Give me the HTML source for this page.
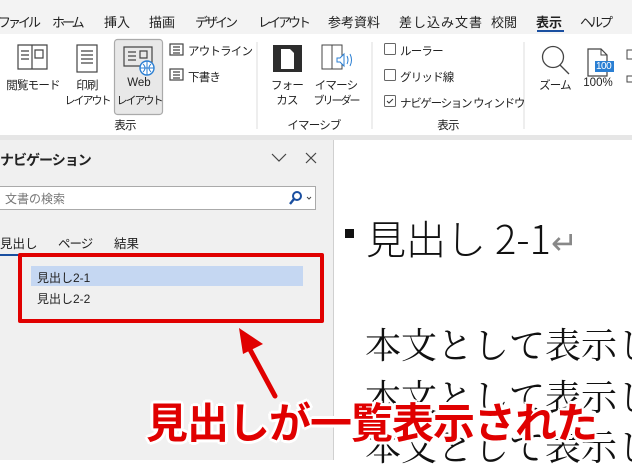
<!DOCTYPE html>
<html><head><meta charset="utf-8"><style>
*{margin:0;padding:0;box-sizing:border-box}
body{width:632px;height:460px;overflow:hidden;position:relative;background:#fff;font-family:"Liberation Sans","Noto Sans CJK JP",sans-serif;color:#222}
.a{position:absolute;white-space:nowrap}
.tab{font-size:13px;top:12px}
.k{letter-spacing:-3px}
.s{font-size:11.5px;letter-spacing:-0.8px}
.n{font-size:11px;letter-spacing:-2px}
.c{text-align:center;width:80px}
.serif{font-family:"Liberation Serif","Noto Serif CJK JP","Noto Serif CJK SC",serif}
</style></head><body>
<div class="a" style="left:0;top:0;width:632px;height:34px;background:#f3f3f3"></div>
<div class="a tab k" style="left:-2px">ファイル</div>
<div class="a tab k" style="left:52px">ホーム</div>
<div class="a tab" style="left:104px">挿入</div>
<div class="a tab" style="left:149px">描画</div>
<div class="a tab k" style="left:195px">デザイン</div>
<div class="a tab k" style="left:258px">レイアウト</div>
<div class="a tab" style="left:328px">参考資料</div>
<div class="a tab" style="left:399px;letter-spacing:1px">差し込み文書</div>
<div class="a tab" style="left:491px">校閲</div>
<div class="a tab" style="left:536px;font-weight:bold">表示</div>
<div class="a" style="left:537px;top:30px;width:27px;height:2px;background:#1a4fa0"></div>
<div class="a tab k" style="left:580px">ヘルプ</div>
<div class="a" style="left:0;top:135px;width:632px;height:5px;background:#e6e6e6"></div>
<svg class="a" style="left:0;top:34px" width="632" height="101">
<g fill="none" stroke="#444" stroke-width="1.2">
<path d="M18 11h14v24H18zM32 11h15v24H32z"/><path d="M21 17h8M21 21h8M21 25h8M35 16h8v8h-8z"/>
<rect x="77" y="11" width="20" height="27"/><path d="M81 17h12M81 21h12M81 25h12M81 29h12"/>
<rect x="114.5" y="5.5" width="48" height="75" rx="3" fill="#e8e8e8" stroke="#aaa"/>
<path d="M124 13h28v19h-28z"/><path d="M128 18h8M128 22h8M128 26h8M140 17h7v7h-7z"/>
<rect x="170" y="10" width="13" height="11"/><path d="M173 13h7M173 16h7M173 19h7"/>
<rect x="170" y="35" width="13" height="11"/><path d="M173 38h7M173 41h7M173 44h7"/>
</g>
<circle cx="147" cy="34" r="7" fill="#fff" stroke="#2b7fd3" stroke-width="1.4"/>
<path d="M140 34h14M147 27v14M143 30q4 4 0 8M151 30q-4 4 0 8" stroke="#2b7fd3" fill="none"/>
<line x1="257" y1="8" x2="257" y2="95" stroke="#ddd"/>
<rect x="273" y="11" width="29" height="27" fill="#2d2d2d"/><path d="M281 15h9l4 4v16h-13z" fill="#fff"/>
<path d="M322 11h10v24h-10zM332 11h10v24h-10z" fill="none" stroke="#444"/>
<path d="M337 24h3l4-4v12l-4-4h-3z" fill="#fff" stroke="#2b7fd3"/><path d="M347 22q2 4 0 8M350 20q3 6 0 12" stroke="#2b7fd3" fill="none"/>
<line x1="372" y1="8" x2="372" y2="95" stroke="#ddd"/>
<rect x="384.5" y="9.5" width="11" height="11" rx="1" fill="#fff" stroke="#666"/>
<rect x="384.5" y="35.5" width="11" height="11" rx="1" fill="#fff" stroke="#666"/>
<rect x="384.5" y="61.5" width="11" height="11" rx="1" fill="#fff" stroke="#666"/>
<path d="M387 67l2 2 4-4" stroke="#333" fill="none"/>
<line x1="524" y1="8" x2="524" y2="95" stroke="#ddd"/>
<circle cx="553" cy="23" r="10.5" fill="none" stroke="#444" stroke-width="1.3"/><path d="M560 31l9 9" stroke="#444" stroke-width="1.3"/>
<path d="M588 15h13l6 6v21h-19z" fill="none" stroke="#444" stroke-width="1.2"/><path d="M601 15v6h6" fill="none" stroke="#444"/>
<rect x="595" y="27" width="19" height="11" fill="#2b7fd3"/>
<rect x="627" y="16" width="6" height="9" fill="none" stroke="#444"/><rect x="627" y="42" width="6" height="6" fill="none" stroke="#444"/>
</svg>
<div class="a" style="left:596px;top:61px;color:#fff;font-size:10px;letter-spacing:-0.5px">100</div>
<div class="a s c" style="left:-7px;top:77px">閲覧モード</div>
<div class="a s c" style="left:47px;top:77px">印刷</div>
<div class="a n c" style="left:47px;top:92px">レイアウト</div>
<div class="a s c" style="left:99px;top:77px;letter-spacing:0">Web</div>
<div class="a n c" style="left:99px;top:92px">レイアウト</div>
<div class="a s" style="left:188px;top:43px">アウトライン</div>
<div class="a s" style="left:188px;top:69px">下書き</div>
<div class="a s c" style="left:85px;top:117px">表示</div>
<div class="a s c" style="left:247px;top:77px">フォー</div>
<div class="a s c" style="left:247px;top:92px">カス</div>
<div class="a s c" style="left:296px;top:77px">イマーシ</div>
<div class="a n c" style="left:296px;top:92px">ブリーダー</div>
<div class="a s c" style="left:274px;top:117px">イマーシブ</div>
<div class="a s" style="left:400px;top:43px">ルーラー</div>
<div class="a s" style="left:400px;top:69px">グリッド線</div>
<div class="a s" style="left:400px;top:95px;letter-spacing:-1.3px">ナビゲーション ウィンドウ</div>
<div class="a s c" style="left:408px;top:117px">表示</div>
<div class="a s c" style="left:515px;top:77px">ズーム</div>
<div class="a s c" style="left:558px;top:77px;letter-spacing:0">100%</div>
<div class="a" style="left:0;top:140px;width:334px;height:320px;background:#f0f0f0;border-right:1px solid #d0d0d0"></div>
<div class="a" style="left:0;top:150px;font-size:14px;font-weight:bold;letter-spacing:-1px">ナビゲーション</div>
<svg class="a" style="left:270px;top:150px" width="50" height="16"><path d="M2 4l7 7 7-7M36 3l10 10M46 3L36 13" stroke="#444" fill="none" stroke-width="1.2"/></svg>
<div class="a" style="left:-2px;top:186px;width:318px;height:24px;background:#fff;border:1px solid #aaa"></div>
<div class="a" style="left:5px;top:190px;color:#777;font-size:12px">文書の検索</div>
<svg class="a" style="left:287px;top:190px" width="28" height="16"><circle cx="10" cy="6" r="4" fill="none" stroke="#1a4fa0" stroke-width="2"/><path d="M7 9l-4 5" stroke="#1a4fa0" stroke-width="2.4"/><path d="M20 7l2 2 2-2" stroke="#444" fill="none"/></svg>
<div class="a" style="left:0;top:233px;font-size:12.5px">見出し</div>
<div class="a" style="left:58px;top:233px;font-size:12.5px;letter-spacing:-1px">ページ</div>
<div class="a" style="left:114px;top:233px;font-size:12.5px">結果</div>
<div class="a" style="left:0;top:254px;width:34px;height:2px;background:#1a4fa0"></div>
<div class="a" style="left:31px;top:266px;width:272px;height:20px;background:#c5d7f2"></div>
<div class="a" style="left:37px;top:269px;font-size:12px">見出し2-1</div>
<div class="a" style="left:37px;top:290px;font-size:12px">見出し2-2</div>
<div class="a" style="left:18px;top:253px;width:306px;height:70px;border:4px solid #e00000;border-radius:2px"></div>
<div class="a" style="left:345px;top:229px;width:9px;height:9px;background:#111"></div>
<div class="a" style="left:366px;top:208px;font-size:40px;color:#111;font-family:'Noto Sans CJK JP',sans-serif;font-weight:300">見出し 2-1<span style="color:#888;font-size:32px">↵</span></div>
<div class="a serif" style="left:365px;top:318px;font-size:36px;color:#111">本文として表示し</div>
<div class="a serif" style="left:365px;top:370px;font-size:36px;color:#111">本文として表示し</div>
<div class="a serif" style="left:365px;top:420px;font-size:36px;color:#111">本文として表示し</div>
<svg class="a" style="left:225px;top:322px" width="70" height="80"><path d="M50 74L22 22" stroke="#e00000" stroke-width="5" stroke-linecap="round"/><path d="M14 6l24 16-20 10z" fill="#e00000"/></svg>
<div class="a" style="left:146px;top:390px;font-size:42px;font-weight:bold;color:#e00000;letter-spacing:-1px;text-shadow:0 0 3px #fff,2px 2px 0 #fff,-2px -2px 0 #fff,2px -2px 0 #fff,-2px 2px 0 #fff,0 3px 0 #fff,3px 0 0 #fff,-3px 0 0 #fff,0 -3px 0 #fff">見出しが一覧表示された</div>
</body></html>
